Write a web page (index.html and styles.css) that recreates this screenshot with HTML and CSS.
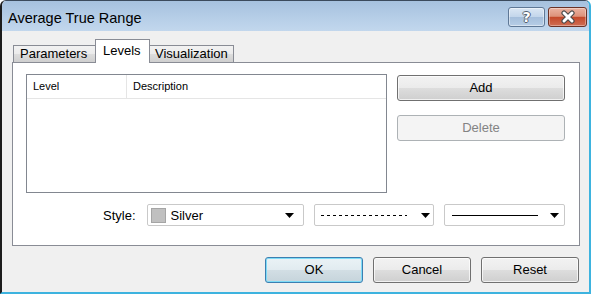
FILE: index.html
```html
<!DOCTYPE html>
<html>
<head>
<meta charset="utf-8">
<title>Average True Range</title>
<link rel="stylesheet" href="styles.css">
</head>
<body>
<div class="window">
  <div class="titlebar">
    <span class="title">Average True Range</span>
    <div class="caption-btns">
      <div class="cap-btn cap-help"><span class="help-glyph">?</span></div>
      <div class="cap-btn cap-close">
        <svg width="18" height="14" viewBox="0 0 18 14">
          <path d="M5 3 L13 11 M13 3 L5 11" stroke="#4b4b4b" stroke-width="5.2" stroke-linecap="round" fill="none"/>
          <path d="M5 3 L13 11 M13 3 L5 11" stroke="#ffffff" stroke-width="3" stroke-linecap="round" fill="none"/>
        </svg>
      </div>
    </div>
  </div>
  <div class="client">
    <div class="tabs">
      <div class="tab tab-params">Parameters</div>
      <div class="tab tab-active">Levels</div>
      <div class="tab tab-vis">Visualization</div>
    </div>
    <div class="panel">
      <div class="top-row">
        <div class="listview">
          <div class="lv-header">
            <div class="lv-col lv-col-level">Level</div>
            <div class="lv-col lv-col-desc">Description</div>
          </div>
        </div>
        <div class="side-btns">
          <div class="btn btn-wide">Add</div>
          <div class="btn btn-wide btn-disabled">Delete</div>
        </div>
      </div>
      <div class="style-row">
        <span class="style-label">Style:</span>
        <div class="combo combo-color">
          <span class="swatch"></span>
          <span class="combo-text">Silver</span>
          <svg class="arrow" width="9" height="5" viewBox="0 0 9 5"><polygon points="0,0 9,0 4.5,5" fill="#000"/></svg>
        </div>
        <div class="combo combo-line">
          <span class="line-dotted"></span>
          <svg class="arrow" width="9" height="5" viewBox="0 0 9 5"><polygon points="0,0 9,0 4.5,5" fill="#000"/></svg>
        </div>
        <div class="combo combo-width">
          <span class="line-solid"></span>
          <svg class="arrow" width="9" height="5" viewBox="0 0 9 5"><polygon points="0,0 9,0 4.5,5" fill="#000"/></svg>
        </div>
      </div>
    </div>
    <div class="footer">
      <div class="btn btn-dlg btn-default">OK</div>
      <div class="btn btn-dlg">Cancel</div>
      <div class="btn btn-dlg">Reset</div>
    </div>
  </div>
</div>
</body>
</html>
```
FILE: styles.css
```css
html, body {
  margin: 0;
  padding: 0;
  background: #ffffff;
}

body {
  font-family: "Liberation Sans", Arial, sans-serif;
  font-size: 13px;
  color: #000;
}

.window {
  width: 591px;
  height: 294px;
  box-sizing: border-box;
  border-top: 1px solid #3b4a5c;
  border-left: 2px solid #1c1c1c;
  border-right: 2px solid #3db3df;
  border-bottom: 2px solid #3db3df;
  border-radius: 6px 6px 0 0;
  overflow: hidden;
  display: flex;
  flex-direction: column;
  background: #f0f0f0;
}

.titlebar {
  height: 30px;
  flex: none;
  display: flex;
  justify-content: space-between;
  align-items: flex-start;
  background: linear-gradient(to bottom, #a6c1de 0%, #b7cfe8 60%, #c2d7ed 100%);
  padding-left: 6px;
  padding-right: 2px;
}

.title {
  font-size: 14.5px;
  line-height: 17px;
  margin-top: 9px;
  color: #000;
}

.caption-btns {
  display: flex;
  gap: 3px;
  margin-top: 6px;
}

.cap-btn {
  height: 20px;
  box-sizing: border-box;
  border-radius: 3px;
  display: flex;
  align-items: center;
  justify-content: center;
}

.cap-help {
  width: 37px;
  border: 1px solid #5f7896;
  background: linear-gradient(to bottom, #dbe7f4 0%, #c3d6eb 48%, #a5bfdc 52%, #b6cde6 100%);
  box-shadow: inset 0 0 0 1px rgba(255, 255, 255, 0.45);
}

.help-glyph {
  font-family: "DejaVu Sans", sans-serif;
  font-weight: bold;
  font-size: 14px;
  line-height: 16px;
  color: #ffffff;
  text-shadow: 1px 0 0 #55616f, -1px 0 0 #55616f, 0 1px 0 #55616f, 0 -1px 0 #55616f;
}

.cap-close {
  width: 39px;
  border: 1px solid #6b3226;
  background: linear-gradient(to bottom, #ebb3a1 0%, #dd927a 46%, #c4492a 52%, #cf6e54 100%);
  box-shadow: inset 0 0 0 1px rgba(255, 255, 255, 0.35);
}

.client {
  flex: 1;
  padding: 8px 9px 0 10px;
}

.tabs {
  display: flex;
  align-items: flex-end;
  height: 23px;
  padding-left: 1px;
  position: relative;
  z-index: 1;
}

.tab {
  height: 17px;
  box-sizing: border-box;
  border: 1px solid #898c95;
  border-bottom: 0;
  background: linear-gradient(to bottom, #f2f2f2 0%, #ebebeb 50%, #dddddd 51%, #cfcfcf 100%);
  line-height: 15px;
  padding: 0 6px;
  white-space: nowrap;
}

.tab-params {
  width: 82px;
  border-right: 0;
}

.tab-active {
  width: 55px;
  height: 24px;
  margin-bottom: -1px;
  background: #ffffff;
  line-height: 21px;
  padding: 0 7px 0 7px;
}

.tab-vis {
  width: 84px;
  border-left: 0;
  padding: 0 5px;
}

.panel {
  height: 184px;
  box-sizing: border-box;
  border: 1px solid #898c95;
  background: #ffffff;
  padding: 11px 14px 0 13px;
}

.top-row {
  display: flex;
  gap: 10px;
}

.listview {
  width: 361px;
  height: 119px;
  box-sizing: border-box;
  border: 1px solid #828790;
  background: #ffffff;
}

.lv-header {
  display: flex;
  height: 24px;
  box-sizing: border-box;
  border-bottom: 1px solid #e5e5e5;
  font-size: 11px;
  line-height: 23px;
}

.lv-col {
  padding-left: 6px;
  box-sizing: border-box;
}

.lv-col-level {
  width: 100px;
  border-right: 1px solid #e5e5e5;
}

.side-btns {
  width: 168px;
  display: flex;
  flex-direction: column;
  gap: 14px;
  padding-top: 1px;
}

.btn {
  height: 26px;
  box-sizing: border-box;
  border: 1px solid #707070;
  border-radius: 3px;
  background: linear-gradient(to bottom, #f2f2f2 0%, #ebebeb 50%, #dddddd 51%, #cfcfcf 100%);
  box-shadow: inset 0 0 0 1px rgba(255, 255, 255, 0.7);
  display: flex;
  align-items: center;
  justify-content: center;
  font-size: 13px;
  line-height: 16px;
}

.btn-disabled {
  border-color: #adb2b5;
  background: #f4f4f4;
  box-shadow: none;
  color: #838383;
}

.style-row {
  display: flex;
  align-items: center;
  margin-top: 11px;
  padding-left: 77px;
}

.style-label {
  margin-right: 11px;
}

.combo {
  height: 22px;
  box-sizing: border-box;
  border: 1px solid #c9c9c9;
  border-radius: 2px;
  background: #ffffff;
  display: flex;
  align-items: center;
  margin-right: 10px;
}

.combo-color {
  width: 160px;
  padding: 0 9px 0 3px;
}

.combo-line {
  width: 120px;
  padding: 0 5px 0 6px;
}

.combo-width {
  width: 121px;
  padding: 0 6px 0 7px;
  margin-right: 0;
}

.swatch {
  width: 15px;
  height: 15px;
  box-sizing: border-box;
  background: #c0c0c0;
  border: 1px solid #a5a5a5;
  margin-right: 5px;
  flex: none;
}

.combo-text {
  flex: 1;
}

.arrow {
  flex: none;
  display: block;
}

.line-dotted {
  flex: none;
  width: 86px;
  height: 1px;
  margin-right: 14px;
  background: repeating-linear-gradient(to right, #000 0, #000 3px, transparent 3px, transparent 6px);
}

.line-solid {
  flex: none;
  width: 86px;
  height: 1px;
  margin-right: 12px;
  background: #000;
}

.footer {
  display: flex;
  justify-content: flex-end;
  gap: 10px;
  margin-top: 11px;
  margin-right: 1px;
}

.btn-dlg {
  width: 98px;
}

.btn-default {
  border-color: #3c7fb1;
  box-shadow: inset 0 0 0 1px #7fdcf7;
  background: linear-gradient(to bottom, #eaf2f6 0%, #e1ebf0 50%, #d2dee4 51%, #c6d4db 100%);
}
```
